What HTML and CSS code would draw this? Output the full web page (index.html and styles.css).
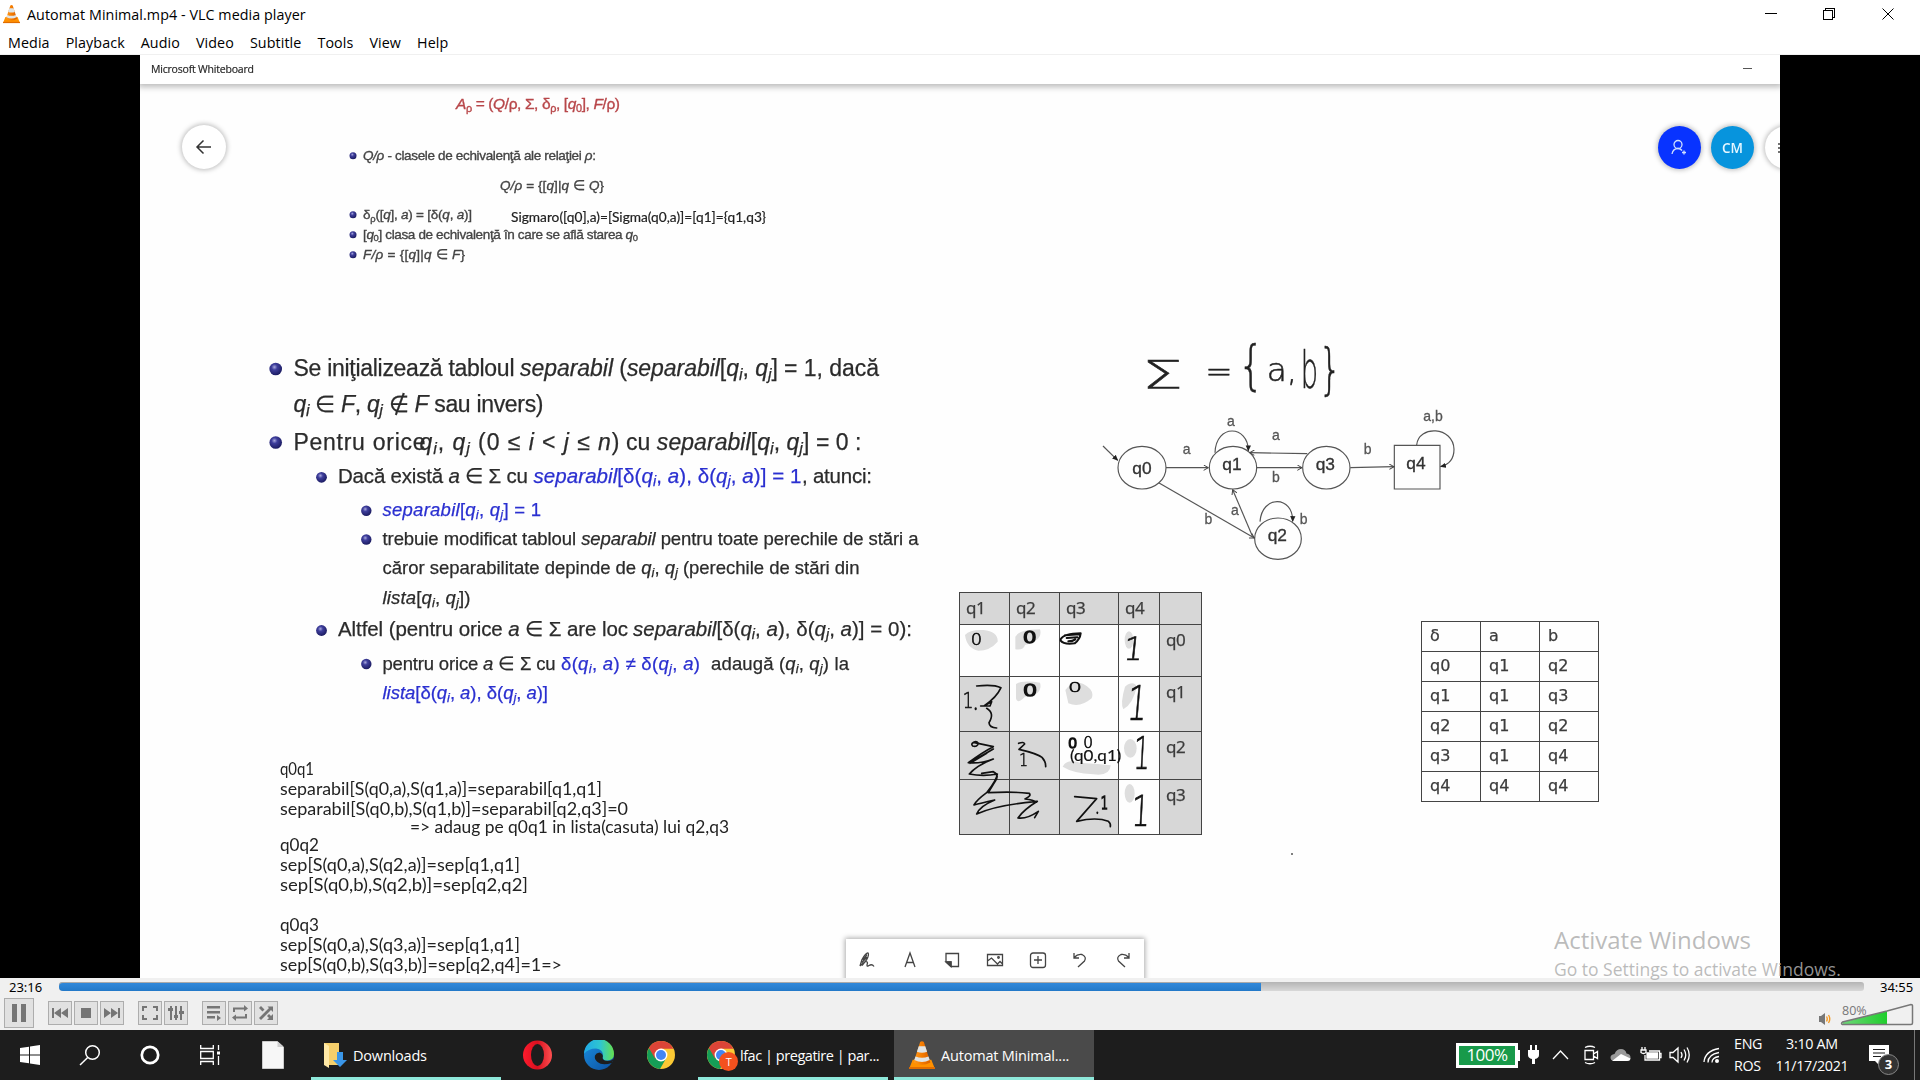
FILE: index.html
```html
<!DOCTYPE html>
<html lang="en">
<head>
<meta charset="utf-8">
<title>Automat Minimal.mp4 - VLC media player</title>
<link rel="stylesheet" href="styles.css">
</head>
<body>
<svg class="defs" width="0" height="0" aria-hidden="true">
  <defs>
    <radialGradient id="ball" cx=".4" cy=".35" r=".65"><stop offset="0" stop-color="#a9a9dd"/><stop offset=".35" stop-color="#3e3e9c"/><stop offset="1" stop-color="#1c1c62"/></radialGradient>
    <linearGradient id="coneFill"><stop offset="0" stop-color="#ff9a1e"/><stop offset=".5" stop-color="#f57c00"/><stop offset="1" stop-color="#d85f00"/></linearGradient>
    <linearGradient id="operaFill"><stop offset="0" stop-color="#ff1b2d"/><stop offset=".5" stop-color="#d8101f"/><stop offset="1" stop-color="#ff5050"/></linearGradient>
    <linearGradient id="edgeTop"><stop offset="0" stop-color="#1fa9e8"/><stop offset=".55" stop-color="#2fc6cf"/><stop offset="1" stop-color="#66e04c"/></linearGradient>
    <linearGradient id="edgeLow" x1="0" y1="0" x2="1" y2="1"><stop offset="0" stop-color="#1a8ee0"/><stop offset="1" stop-color="#0c4f9e"/></linearGradient>
    <linearGradient id="volFill"><stop offset="0" stop-color="#6fd67a"/><stop offset="1" stop-color="#1fce2c"/></linearGradient>
    <symbol id="cone" viewBox="0 0 28 30">
      <path d="M4 20h20l4 10H0z" fill="#ff9100"/><path d="M0 28h28v2H0z" fill="#e06c00"/>
      <path d="M12 1q2-1.500 4 0l7 22q-9 5-18 0z" fill="url(#coneFill)"/>
      <path d="M10.500 5.500h7l2 6q-5.500 2-11 0zM7 16.500q7 3 14 0l1.300 4q-8.300 4-16.600 0z" fill="#dfe4e6"/>
    </symbol>
    <symbol id="chrome" viewBox="0 0 28 28">
      <circle cx="14" cy="14" r="14" fill="#fbc934"/>
      <path d="M14 14L1.900 7A14 14 0 0 0 13 28l6-10.500z" fill="#159e57"/>
      <path d="M1.900 7A14 14 0 0 1 26.500 7.700H14L8 17.500z" fill="#db4437"/>
      <circle cx="14" cy="14" r="6.400" fill="#fff"/><circle cx="14" cy="14" r="5" fill="#4285f4"/>
    </symbol>
    <marker id="open" viewBox="0 0 18 18" refX="16" refY="9" markerWidth="18" markerHeight="18" markerUnits="userSpaceOnUse" orient="auto"><path d="M2 1L16 9L2 17" fill="none" stroke="#444" stroke-width="3"/></marker>
    <marker id="solid" viewBox="0 0 16 16" refX="14" refY="8" markerWidth="18" markerHeight="18" markerUnits="userSpaceOnUse" orient="auto"><path d="M0 1L16 8L0 15z" fill="#222"/></marker>
  </defs>
</svg>

<header class="titlebar">
  <svg class="app-icon" width="17" height="20"><use href="#cone"/></svg>
  <span class="app-title">Automat Minimal.mp4 - VLC media player</span>
  <svg class="win-controls" width="130" height="14" fill="none" stroke="#000" shape-rendering="crispEdges"><path d="M0 6.500h12M58.500 3.500h9v9h-9zM60.500 3v-1.500h9v9h-2"/><path d="M117.500 1.500l11 11M128.500 1.500l-11 11" shape-rendering="auto"/></svg>
</header>
<nav class="menubar">
  <span>Media</span><span>Playback</span><span>Audio</span><span>Video</span><span>Subtitle</span><span>Tools</span><span>View</span><span>Help</span>
</nav>

<main class="video">
  <section class="board">
    <div class="board-head"><span>Microsoft Whiteboard</span><i></i></div>

    <svg class="ink" viewBox="140 55 1640 923" width="1640" height="923">
      <g class="formula small">
        <text class="red" x="456" y="109" textLength="164"><tspan class="it">A</tspan><tspan class="sub" dy="3">ρ</tspan><tspan dy="-3"> = (</tspan><tspan class="it">Q</tspan>/ρ, Σ, δ<tspan class="sub" dy="3">ρ</tspan><tspan dy="-3">, [</tspan><tspan class="it">q</tspan><tspan class="sub" dy="3">0</tspan><tspan dy="-3">], </tspan><tspan class="it">F</tspan>/ρ)</text>
        <text x="363" y="159.500" textLength="233"><tspan class="it">Q/ρ</tspan> - clasele de echivalenţă ale relaţiei <tspan class="it">ρ</tspan>:</text>
        <text x="500" y="189.500" textLength="104"><tspan class="it">Q/ρ</tspan> = {[<tspan class="it">q</tspan>]|<tspan class="it">q</tspan> ∈ <tspan class="it">Q</tspan>}</text>
        <text x="363" y="219" textLength="109">δ<tspan class="sub" dy="3">ρ</tspan><tspan dy="-3">([</tspan><tspan class="it">q</tspan>], <tspan class="it">a</tspan>) = [δ(<tspan class="it">q</tspan>, <tspan class="it">a</tspan>)]</text>
        <text x="363" y="238.500" textLength="275">[<tspan class="it">q</tspan><tspan class="sub" dy="2">0</tspan><tspan dy="-2">] clasa de echivalenţă în care se află starea </tspan><tspan class="it">q</tspan><tspan class="sub" dy="2">0</tspan></text>
        <text x="363" y="259" textLength="102"><tspan class="it">F/ρ</tspan> = {[<tspan class="it">q</tspan>]|<tspan class="it">q</tspan> ∈ <tspan class="it">F</tspan>}</text>
      </g>
      <g fill="url(#ball)">
        <circle cx="353" cy="155.700" r="3.500"/><circle cx="353" cy="214.700" r="3.500"/><circle cx="353" cy="234.700" r="3.500"/><circle cx="353" cy="254.700" r="3.500"/>
        <circle cx="275.700" cy="369" r="6.300"/><circle cx="275.700" cy="442.500" r="6.300"/>
        <circle cx="321.500" cy="477.300" r="5.400"/><circle cx="321.500" cy="630.500" r="5.400"/>
        <circle cx="366.300" cy="510.700" r="5.200"/><circle cx="366.300" cy="539.500" r="5.200"/><circle cx="366.300" cy="664" r="5.200"/>
      </g>

      <g class="formula">
        <g class="l1">
          <text x="293.500" y="375.500" textLength="221">Se iniţializează tabloul</text>
          <text x="520" y="375.500" textLength="359"><tspan class="it">separabil</tspan> (<tspan class="it">separabil</tspan>[<tspan class="it">q</tspan><tspan class="sub it" dy="4">i</tspan><tspan dy="-4">, </tspan><tspan class="it">q</tspan><tspan class="sub it" dy="4">j</tspan><tspan dy="-4">] = 1, dacă</tspan></text>
          <text x="293.500" y="411.500" textLength="250"><tspan class="it">q</tspan><tspan class="sub it" dy="4">i</tspan><tspan dy="-4"> ∈ </tspan><tspan class="it">F</tspan>, <tspan class="it">q</tspan><tspan class="sub it" dy="4">j</tspan><tspan dy="-4"> ∉ </tspan><tspan class="it">F</tspan> sau invers)</text>
          <text x="293.500" y="449.500" textLength="132">Pentru orice </text>
          <text x="419.500" y="449.500" textLength="200"><tspan class="it">q</tspan><tspan class="sub it" dy="4">i</tspan><tspan dy="-4">, </tspan><tspan class="it">q</tspan><tspan class="sub it" dy="4">j</tspan><tspan dy="-4"> (0 ≤ </tspan><tspan class="it">i</tspan> &lt; <tspan class="it">j</tspan> ≤ <tspan class="it">n</tspan>)</text>
          <text x="626" y="449.500" textLength="235.500">cu <tspan class="it">separabil</tspan>[<tspan class="it">q</tspan><tspan class="sub it" dy="4">i</tspan><tspan dy="-4">, </tspan><tspan class="it">q</tspan><tspan class="sub it" dy="4">j</tspan><tspan dy="-4">] = 0 :</tspan></text>
        </g>
        <g class="l2">
          <text x="338" y="482.500" textLength="190">Dacă există <tspan class="it">a</tspan> ∈ Σ cu</text>
          <text class="blue" x="533.500" y="482.500" textLength="268"><tspan class="it">separabil</tspan>[δ(<tspan class="it">q</tspan><tspan class="sub it" dy="3">i</tspan><tspan dy="-3">, </tspan><tspan class="it">a</tspan>), δ(<tspan class="it">q</tspan><tspan class="sub it" dy="3">j</tspan><tspan dy="-3">, </tspan><tspan class="it">a</tspan>)] = 1</text>
          <text x="802" y="482.500" textLength="70">, atunci:</text>
          <text x="338" y="636" textLength="290">Altfel (pentru orice <tspan class="it">a</tspan> ∈ Σ are loc</text>
          <text x="633" y="636" textLength="279"><tspan class="it">separabil</tspan>[δ(<tspan class="it">q</tspan><tspan class="sub it" dy="3">i</tspan><tspan dy="-3">, </tspan><tspan class="it">a</tspan>), δ(<tspan class="it">q</tspan><tspan class="sub it" dy="3">j</tspan><tspan dy="-3">, </tspan><tspan class="it">a</tspan>)] = 0):</text>
        </g>
        <g class="l3">
          <text class="blue" x="382.500" y="516" textLength="158.500"><tspan class="it">separabil</tspan>[<tspan class="it">q</tspan><tspan class="sub it" dy="3">i</tspan><tspan dy="-3">, </tspan><tspan class="it">q</tspan><tspan class="sub it" dy="3">j</tspan><tspan dy="-3">] = 1</tspan></text>
          <text x="382.500" y="544.500" textLength="536">trebuie modificat tabloul <tspan class="it">separabil</tspan> pentru toate perechile de stări a</text>
          <text x="382.500" y="574" textLength="477">căror separabilitate depinde de <tspan class="it">q</tspan><tspan class="sub it" dy="3">i</tspan><tspan dy="-3">, </tspan><tspan class="it">q</tspan><tspan class="sub it" dy="3">j</tspan><tspan dy="-3"> (perechile de stări din</tspan></text>
          <text x="382.500" y="603.500" textLength="88"><tspan class="it">lista</tspan>[<tspan class="it">q</tspan><tspan class="sub it" dy="3">i</tspan><tspan dy="-3">, </tspan><tspan class="it">q</tspan><tspan class="sub it" dy="3">j</tspan><tspan dy="-3">])</tspan></text>
          <text x="382.500" y="670" textLength="173">pentru orice <tspan class="it">a</tspan> ∈ Σ cu</text>
          <text class="blue" x="561" y="670" textLength="139">δ(<tspan class="it">q</tspan><tspan class="sub it" dy="3">i</tspan><tspan dy="-3">, </tspan><tspan class="it">a</tspan>) ≠ δ(<tspan class="it">q</tspan><tspan class="sub it" dy="3">j</tspan><tspan dy="-3">, </tspan><tspan class="it">a</tspan>)</text>
          <text x="711" y="670" textLength="138">adaugă (<tspan class="it">q</tspan><tspan class="sub it" dy="3">i</tspan><tspan dy="-3">, </tspan><tspan class="it">q</tspan><tspan class="sub it" dy="3">j</tspan><tspan dy="-3">) la</tspan></text>
          <text class="blue" x="382.500" y="699" textLength="165.500"><tspan class="it">lista</tspan>[δ(<tspan class="it">q</tspan><tspan class="sub it" dy="3">i</tspan><tspan dy="-3">, </tspan><tspan class="it">a</tspan>), δ(<tspan class="it">q</tspan><tspan class="sub it" dy="3">j</tspan><tspan dy="-3">, </tspan><tspan class="it">a</tspan>)]</text>
        </g>
      </g>

      <g class="hand">
        <text class="hand-s" x="511" y="222" textLength="255" lengthAdjust="spacingAndGlyphs">Sigmaro([q0],a)=[Sigma(q0,a)]=[q1]={q1,q3}</text>
        <text x="280" y="775" textLength="34" lengthAdjust="spacingAndGlyphs">q0q1</text>
        <text x="280" y="794.500" textLength="322" lengthAdjust="spacingAndGlyphs">separabil[S(q0,a),S(q1,a)]=separabil[q1,q1]</text>
        <text x="280" y="814.500" textLength="348" lengthAdjust="spacingAndGlyphs">separabil[S(q0,b),S(q1,b)]=separabil[q2,q3]=0</text>
        <text x="410" y="832.500" textLength="319" lengthAdjust="spacingAndGlyphs">=&gt; adaug pe q0q1 in lista(casuta) lui q2,q3</text>
        <text x="280" y="851" textLength="39" lengthAdjust="spacingAndGlyphs">q0q2</text>
        <text x="280" y="870.500" textLength="240" lengthAdjust="spacingAndGlyphs">sep[S(q0,a),S(q2,a)]=sep[q1,q1]</text>
        <text x="280" y="890.500" textLength="248" lengthAdjust="spacingAndGlyphs">sep[S(q0,b),S(q2,b)]=sep[q2,q2]</text>
        <text x="280" y="931" textLength="39" lengthAdjust="spacingAndGlyphs">q0q3</text>
        <text x="280" y="950.500" textLength="240" lengthAdjust="spacingAndGlyphs">sep[S(q0,a),S(q3,a)]=sep[q1,q1]</text>
        <text x="280" y="971" textLength="282" lengthAdjust="spacingAndGlyphs">sep[S(q0,b),S(q3,b)]=sep[q2,q4]=1=&gt;</text>
      </g>

      <g class="automaton" transform="translate(1080 320) scale(.33333)">
        <g class="sigma">
          <text x="185" y="208" font-size="118" textLength="124" lengthAdjust="spacingAndGlyphs">Σ</text>
          <text x="376" y="186" font-size="88" textLength="82" lengthAdjust="spacingAndGlyphs">=</text>
          <text x="474" y="191" font-size="160" textLength="78" lengthAdjust="spacingAndGlyphs">{</text>
          <text x="560" y="182" font-size="96" textLength="92" lengthAdjust="spacingAndGlyphs">a,</text>
          <text x="662" y="203" font-size="154" textLength="52" lengthAdjust="spacingAndGlyphs">b</text>
          <text x="716" y="205" font-size="168" textLength="68" lengthAdjust="spacingAndGlyphs">}</text>
        </g>
        <g fill="none" stroke="#555" stroke-width="3.500">
          <ellipse cx="186" cy="443" rx="72" ry="64"/><ellipse cx="459" cy="443" rx="71" ry="64"/><ellipse cx="739" cy="443" rx="71" ry="64"/><ellipse cx="594" cy="656" rx="70" ry="62"/>
          <path d="M943 376h137v131H943z"/>
          <path d="M69 378L113 421" marker-end="url(#solid)"/><path d="M405 398C408 310 505 315 505 392" marker-end="url(#solid)"/><path d="M540 605C546 523 640 527 638 604" marker-end="url(#solid)"/><path d="M1010 375C1015 315 1120 318 1122 388Q1122 430 1082 440" marker-end="url(#solid)"/>
          <path d="M258 443H385" marker-end="url(#open)"/><path d="M530 443H666" marker-end="url(#open)"/><path d="M682 401L509 398" marker-end="url(#open)"/><path d="M811 443L942 440" marker-end="url(#open)"/><path d="M236 488L523 654" marker-end="url(#open)"/><path d="M518 650L458 509" marker-end="url(#open)"/>
        </g>
        <g class="state"><text x="186" y="461">q0</text><text x="456" y="451">q1</text><text x="736" y="451">q3</text><text x="1008" y="448">q4</text><text x="592" y="662">q2</text></g>
        <g class="edge"><text x="453" y="319">a</text><text x="320" y="402">a</text><text x="588" y="359">a</text><text x="588" y="487">b</text><text x="863" y="402">b</text><text x="1059" y="303">a,b</text><text x="465" y="586">a</text><text x="385" y="612">b</text><text x="671" y="612">b</text></g>
      </g>
      <circle cx="1292" cy="854" r="1" fill="#555"/>
    </svg>

    <table class="grid pairs">
      <colgroup><col class="w50"><col class="w50"><col class="w59"><col class="w41"><col class="w42"></colgroup>
      <tr class="r1"><td>q1</td><td>q2</td><td>q3</td><td>q4</td><td></td></tr>
      <tr class="r2"><td class="on"></td><td class="on"></td><td class="on"></td><td class="on"></td><td>q0</td></tr>
      <tr class="r3"><td></td><td class="on"></td><td class="on"></td><td class="on"></td><td>q1</td></tr>
      <tr class="r4"><td></td><td></td><td class="on"></td><td class="on"></td><td>q2</td></tr>
      <tr class="r5"><td></td><td></td><td></td><td class="on"></td><td>q3</td></tr>
    </table>

    <svg class="marks" viewBox="0 0 840 810" width="280" height="270">
      <g fill="#dedede">
        <path d="M75 165Q90 148 130 150Q175 155 173 185Q150 212 115 212Q80 205 75 165zM226 170Q240 148 300 148Q310 180 255 195Q250 212 226 208zM228 312Q250 300 300 308Q310 345 255 350Q230 375 228 355zM376 330Q400 300 430 312Q465 330 455 355Q420 385 385 370zM368 560Q380 535 420 548Q480 552 512 556Q510 590 460 583Q400 580 368 560z"/>
        <ellipse cx="567" cy="180" rx="13" ry="26"/><path d="M555 320Q580 300 590 320Q580 370 550 388Q540 370 555 320z"/><ellipse cx="571" cy="505" rx="19" ry="28"/><ellipse cx="569" cy="640" rx="15" ry="28"/>
      </g>
      <g class="scribble">
        <path d="M362 178Q372 160 422 160Q420 178 404 190Q370 194 362 182M380 174L412 172M385 184Q398 184 406 178M375 166L420 163" stroke-width="6"/>
        <path d="M110 318Q160 312 183 323Q170 352 133 377L155 365L150 378L122 378M140 385Q165 400 147 428Q148 443 170 444"/>
        <path d="M107 385v3" stroke-width="6"/>
        <path d="M97 490Q108 480 115 490Q112 502 98 498Q92 492 100 487L160 500Q130 515 85 548Q120 552 160 537Q110 556 88 582Q130 590 172 582Q170 600 140 638Q110 660 102 675Q120 670 164 660Q120 678 110 702Q170 675 292 664Q250 690 234 714Q260 718 295 694L284 713M94 545L160 507M140 520L90 550M125 580L160 575Q180 585 165 605L145 638Q220 634 268 640Q275 648 255 657Q280 660 290 666"/>
        <path d="M236 490Q252 484 254 492L237 508Q290 520 306 532Q318 545 317 560"/>
        <path d="M404 650L470 656Q440 690 410 724Q470 710 505 724Q513 730 511 740"/><path d="M472 697v3" stroke-width="5"/>
      </g>
      <g class="digits">
        <text x="92" y="194" font-size="50" textLength="34" lengthAdjust="spacingAndGlyphs">0</text><text x="248" y="188" font-size="46" class="heavy" textLength="42" lengthAdjust="spacingAndGlyphs">0</text><text x="248" y="347" font-size="50" class="heavy" textLength="44" lengthAdjust="spacingAndGlyphs">0</text><text x="384" y="337" font-size="42" textLength="42" lengthAdjust="spacingAndGlyphs">0</text>
        <text x="384" y="505" font-size="44" class="heavy">0</text><text x="430" y="503" font-size="46">0</text>
        <text transform="translate(548 241) skewX(-6)" font-size="96" textLength="58" lengthAdjust="spacingAndGlyphs">1</text>
        <text transform="translate(558 420) skewX(-5)" font-size="144" textLength="60" lengthAdjust="spacingAndGlyphs">1</text>
        <text transform="translate(578 567) skewX(-3)" font-size="136" textLength="50" lengthAdjust="spacingAndGlyphs">1</text>
        <text transform="translate(572 738) skewX(-3)" font-size="128" textLength="56" lengthAdjust="spacingAndGlyphs">1</text>
        <text x="68" y="384" font-size="64" textLength="32" lengthAdjust="spacingAndGlyphs">1</text><text x="238" y="558" font-size="54" textLength="26" lengthAdjust="spacingAndGlyphs">1</text><text x="482" y="688" font-size="54" textLength="22" lengthAdjust="spacingAndGlyphs" class="heavy">1</text>
        <text class="pair" x="390" y="543" font-size="43" textLength="154" lengthAdjust="spacingAndGlyphs">(q0,q1)</text>
      </g>
    </svg>

    <table class="grid delta">
      <tr><td>δ</td><td>a</td><td>b</td></tr>
      <tr><td>q0</td><td>q1</td><td>q2</td></tr>
      <tr><td>q1</td><td>q1</td><td>q3</td></tr>
      <tr><td>q2</td><td>q1</td><td>q2</td></tr>
      <tr><td>q3</td><td>q1</td><td>q4</td></tr>
      <tr><td>q4</td><td>q4</td><td>q4</td></tr>
    </table>

    <div class="round back"><svg width="18" height="18" fill="none" stroke="#333" stroke-width="1.500"><path d="M16 9H2M8.500 2.500L2 9l6.500 6.500"/></svg></div>
    <div class="people">
      <div class="round invite"><svg width="18" height="18" fill="none" stroke="#cfe0ff" stroke-width="1.300"><circle cx="8" cy="5.500" r="4"/><path d="M2 15Q3 9.500 8 9.500Q10.500 9.500 12 11.500M14 11.500v4M12 13.500h4"/></svg></div>
      <div class="round member">CM</div>
      <div class="round more"><svg width="16" height="12" stroke="#444" stroke-width="1.500"><path d="M0 2h16M0 6h16M0 10h16"/></svg></div>
    </div>
    <div class="tools">
      <svg viewBox="0 0 18 18"><path d="M2 15L4 8.500Q8 1.500 10 2q1.500 1.500-1.500 7L4 14.500M5 9L9 3.500M4 11.500L9 6M2 15Q9 8 9.500 12Q8 16.500 11 14.500t5 1"/></svg>
      <svg viewBox="0 0 18 18"><path d="M4 16L9 2l5 14M5.700 11.500h6.600"/></svg>
      <svg viewBox="0 0 18 18"><path d="M3 2.500h12.500v13H8L3 11zM3 11h5v4.500"/><path d="M3 11h5v4.500z" fill="#444"/></svg>
      <svg viewBox="0 0 18 18"><path d="M1.500 3.500h15v11h-15zM1.500 10l4-3 6 6 2.500-2.500 2.500 2.500"/><circle cx="12.500" cy="6.500" r=".8"/></svg>
      <svg viewBox="0 0 18 18"><rect x="1.500" y="2" width="15" height="14.500" rx="2.500"/><path d="M9 5v8M5 9h8"/></svg>
      <svg viewBox="0 0 18 18"><path d="M3 2v5h5M3 6.500Q7 2.500 11 3.500Q16 6 13.500 10L7 16"/></svg>
      <svg viewBox="0 0 18 18"><path d="M15 2v5h-5M15 6.500Q11 2.500 7 3.500Q2 6 4.500 10L11 16"/></svg>
    </div>
  </section>
</main>

<section class="player">
  <div class="seek"><time>23:16</time><div class="track"><div class="played"></div></div><time>34:55</time></div>
  <div class="controls">
    <button class="big"><svg width="18" height="20"><path d="M2 1h5v18H2zM11 1h5v18h-5z"/></svg></button>
    <div class="group">
      <button><svg width="16" height="16"><path d="M0 3h2v10H0zM2 8l7-5v10zM9 8l7-5v10z"/></svg></button>
      <button><svg width="16" height="16"><path d="M3 3h10v10H3z"/></svg></button>
      <button><svg width="16" height="16"><path d="M14 3h2v10h-2zM0 3l7 5-7 5zM7 3l7 5-7 5z"/></svg></button>
    </div>
    <div class="group">
      <button><svg width="16" height="16"><path d="M0 1h5v2H2v3H0zM11 1h5v5h-2V3h-3zM0 10h2v3h3v2H0zM14 10h2v5h-5v-2h3z"/></svg></button>
      <button><svg width="16" height="16"><path d="M2 1h2v14H2zM0 3h5v3H0zM7 1h2v14H7zM6 10h4v3H6zM12 1h2v14h-2zM11 6h5v3h-5z"/></svg></button>
    </div>
    <div class="group">
      <button><svg width="16" height="16"><path d="M1 1h13v2.500H1zM1 6h13v2.500H1zM1 11h8v2.500H1zM11 10l4 3-4 3z"/></svg></button>
      <button><svg width="16" height="16"><path d="M1 7V2.500h11V0l4 3.500-4 3V4.500H3V7zM15 9v4.500H4V16l-4-3.500 4-3v2h9V9z"/></svg></button>
      <button><svg width="16" height="16"><path d="M1 13L11 3 9.500 1.500H15V7l-2-2L3 15zM1 3l2-2 3.500 3.500-2 2zM9 11l2-2 2 2 2-2v6H9l2-2z"/></svg></button>
    </div>
    <div class="volume">
      <svg width="12" height="12"><path d="M0 3h2l4-3v12L2 9H0z" fill="#777"/><path d="M7.500 3.500q1.500 2.500 0 5M9.500 2q2.500 4 0 8" fill="none" stroke="#f59a23" stroke-width="1.400"/></svg>
      <div class="slider"><svg width="74" height="23"><path d="M1.500 19.500L47 8V21H3z" fill="url(#volFill)"/><path d="M47 8L71 1.500q1.500 0 1.500 1V20q0 1.500-1.500 1.500H2.500q-2-1 0-2.500z" fill="none" stroke="#777" stroke-width="1.500"/></svg><span>80%</span></div>
    </div>
  </div>
</section>

<aside class="watermark"><p>Activate Windows</p><p>Go to Settings to activate Windows.</p></aside>

<footer class="taskbar">
  <div class="slot w60"><svg width="20" height="20" fill="#fff"><path d="M0 3l9-1.300V9.500H0zM10 1.500L20 0v9.500H10zM0 10.500h9v7.800L0 17zM10 10.500h10V20l-10-1.500z"/></svg></div>
  <div class="slot w60"><svg width="22" height="22" fill="none" stroke="#fff" stroke-width="1.500"><circle cx="13.500" cy="8.500" r="6.800"/><path d="M8.700 13.500L1 21"/></svg></div>
  <div class="slot w60"><svg width="20" height="20"><circle cx="10" cy="10" r="8.200" fill="none" stroke="#fff" stroke-width="2.700"/></svg></div>
  <div class="slot w60"><svg width="20" height="20" fill="none" stroke="#fff" stroke-width="1.300"><path d="M.7 0v3.500h12.600V0M.7 20v-3.500h12.600V20M.7 6.500h12.600v7H.7zM18.500 0v5M18.500 11v9"/><path d="M17 6.500h3v3h-3z" fill="#fff" stroke="none"/></svg></div>
  <div class="slot w66"><svg width="22" height="28"><path d="M.5.500h15L21.500 6v21.500H.5z" fill="#f7f7f7" stroke="#ccc"/><path d="M15.500.500V6h6z" fill="#cfcfcf"/></svg></div>
  <div class="task downloads"><svg width="23" height="28"><path d="M0 2h15v22H0z" fill="#f5cf6b"/><path d="M0 2l5 3v22l-5-3z" fill="#ffe9a6"/><path d="M13 11h6v8h4l-7 7-7-7h4z" fill="#3a96e8"/></svg><span>Downloads</span></div>
  <div class="slot opera"><svg width="29" height="30"><ellipse cx="14.500" cy="15" rx="14.500" ry="14.500" fill="url(#operaFill)"/><ellipse cx="14.500" cy="15" rx="6.500" ry="11" fill="#1d1d1d"/></svg></div>
  <div class="slot edge-app"><svg width="30" height="30"><circle cx="15" cy="15" r="15" fill="url(#edgeLow)"/><path d="M0 14A15 15 0 0 1 30 14Q30 20 23 20.500Q18 20.500 19 16Q19 9 12 8.500Q4 8.500 0 14z" fill="url(#edgeTop)"/><path d="M11 15.500Q12 13 15.500 12.500Q20 14 18.500 18Q19 21 24 21Q28 21 30 18L28 23Q18 26 13.500 22Q10 19 11 15.500z" fill="#1d1d1d"/></svg></div>
  <div class="slot chrome-app"><svg width="28" height="28"><use href="#chrome"/></svg></div>
  <div class="task browser"><div class="badged"><svg width="28" height="28"><use href="#chrome"/></svg><b>T</b></div><span>lfac | pregatire | par...</span></div>
  <div class="task active"><svg width="26" height="30"><use href="#cone"/></svg><span>Automat Minimal....</span></div>

  <div class="tray">
    <div class="charge">100%</div>
    <svg class="plug" width="11" height="20" fill="#fff"><path d="M2 0h2v5h3V0h2v5h2v5q0 3-4 4v5H4v-5q-4-1-4-4V5h2z"/></svg>
    <svg class="icons" width="170" height="20" fill="none" stroke="#fff" stroke-width="1.300">
      <path d="M1 14l7.500-8 7.500 8"/>
      <path d="M33 5.500h8.500v9H33zM41.500 9l4-2.500v7l-4-2.500M33 2.500q5-2.500 10 0M33 17.500q5 2.500 10 0"/>
      <path d="M62 16q-3.500-.5-3.500-3.500t4-3.500q2-5 6.500-5t5.500 4.500q4 .5 4 4T75 16z" fill="#9a9a9a" stroke="none"/><path d="M60 16l9-7 9.500 4.500Q78 16 75 16z" fill="#fff" stroke="none"/>
      <path d="M97 6h10.500v9H93v-5M107.500 8.500h1.500v4h-1.500M90 2v3M93 2v3M89 5h5v2.500q-2.500 2-5 0z"/><path d="M95 8h10.500v5H95z" fill="#fff"/>
      <path d="M118 7.500h3l5-4.500v14l-5-4.500h-3zM129 7q2 3 0 6M132 4.500q3.500 5.500 0 11M135 2.500q4.500 7.500 0 15"/>
      <path d="M152 17Q153 6 167 3.500M156 17.500Q156 9.500 167 7.500M160 17.500Q160 12.500 167 11.500" /><circle cx="165" cy="16" r="2" fill="#fff" stroke="none"/>
    </svg>
    <div class="lang"><span>ENG</span><span>ROS</span></div>
    <div class="clock"><span>3:10 AM</span><span>11/17/2021</span></div>
    <div class="notify"><svg width="20" height="20"><path d="M0 0h20v16H10v4l-4-4H0z" fill="#fff"/><path d="M4 4.500h12M4 8h12M4 11.500h8" stroke="#1d1d1d" stroke-width="1.200"/></svg><b>3</b></div>
    <i class="peek"></i>
  </div>
</footer>
</body>
</html>
```
FILE: styles.css
```css
* { box-sizing: border-box; }
body {
  margin: 0;
  width: 1920px;
  height: 1080px;
  overflow: hidden;
  display: flex;
  flex-direction: column;
  background: #fff;
  color: #000;
  font-family: "Open Sans", "Noto Sans", sans-serif;
  font-size: 14px;
}
svg { display: block; flex: none; }
.defs { position: absolute; }

/* window chrome */
.titlebar { height: 30px; display: flex; align-items: center; padding: 0 25px 2px 3px; }
.app-icon { margin-right: 7px; }
.app-title { font-size: 14.3px; letter-spacing: .06px; }
.win-controls { margin-left: auto; }
.menubar { height: 25px; display: flex; align-items: center; gap: 16px; padding: 0 8px; font-size: 14.3px; letter-spacing: .09px; border-bottom: 1px solid #f0f0f0; }

/* video area */
.video { height: 923px; background: #000; display: flex; justify-content: center; }
.board { position: relative; width: 1640px; height: 923px; background: #fefefe; overflow: hidden; }
.board-head {
  height: 29px; display: flex; align-items: center; justify-content: space-between;
  padding: 0 28px 2px 11px; font-size: 10.500px; letter-spacing: -.2px; color: #222; background: #fff;
  -webkit-text-stroke: .2px #333; box-shadow: 0 1px 6px 2px #bbb; filter: blur(.3px);
}
.board-head i { width: 9px; height: 1.500px; background: #555; }
.ink, .marks { position: absolute; filter: blur(.4px); }
.ink { left: 0; top: 0; }
.marks { left: 800px; top: 525px; }

.formula { font-family: "Liberation Sans", sans-serif; fill: #2b2b2b; stroke: #2b2b2b; stroke-width: .25px; }
.it { font-style: italic; }
.sub { font-size: 70%; }
.blue { fill: #2a2fd0; stroke: #2a2fd0; }
.small { font-size: 13.500px; fill: #444; stroke: #444; stroke-width: .35px; }
.small .red { font-size: 15.500px; fill: #b8474a; stroke: #b8474a; }
.l1 { font-size: 23px; }
.l2 { font-size: 20.500px; }
.l3 { font-size: 18.500px; }
.hand { font-family: Lato, sans-serif; font-size: 17.500px; fill: #222; }
.hand-s { font-size: 13.500px; stroke: #222; stroke-width: .2px; }
.sigma { font-family: "DejaVu Sans Light", "DejaVu Sans", sans-serif; font-weight: 200; fill: #222; stroke: #222; stroke-width: 1.500px; }
.state { font: 52px "Liberation Sans", sans-serif; fill: #333; text-anchor: middle; stroke: #333; stroke-width: 1px; }
.edge { font: 42px "Liberation Sans", sans-serif; fill: #555; text-anchor: middle; stroke: #555; stroke-width: .8px; }
.scribble { fill: none; stroke: #111; stroke-width: 5px; stroke-linecap: round; stroke-linejoin: round; }
.digits { font-family: "DejaVu Sans Light", "DejaVu Sans", sans-serif; font-weight: 200; fill: #111; stroke: #111; stroke-width: 2px; }
.digits .heavy { stroke-width: 5px; }
.digits .pair { font-family: Lato, sans-serif; font-weight: 400; stroke-width: .5px; }

/* tables on the canvas */
.grid { position: absolute; border-collapse: collapse; table-layout: fixed; filter: blur(.4px); color: #3c3c3c; -webkit-text-stroke: .25px #3c3c3c; }
.grid td { border: 1.500px solid #444; padding: 0; vertical-align: top; }
.pairs { left: 819px; top: 537px; width: 242px; font: 17px/20px "Noto Sans", sans-serif; letter-spacing: -.5px; background: #d7d7d7; }
.pairs td { padding: 5px 0 0 6px; }
.pairs .on { background: #fefefe; }
.w50 { width: 50px; } .w59 { width: 59px; } .w41 { width: 41px; } .w42 { width: 42px; }
.r1 { height: 32px; } .r2 { height: 52px; } .r3 { height: 55px; } .r4 { height: 48px; } .r5 { height: 55px; }
.delta { left: 1281px; top: 566px; width: 178px; font: 16px/19px "DejaVu Sans", sans-serif; }
.delta tr { height: 30px; }
.delta td { padding: 4px 0 0 8px; }

/* floating whiteboard controls */
.round { width: 43px; height: 43px; border-radius: 50%; display: flex; align-items: center; justify-content: center; background: #fff; box-shadow: 0 0 5px 1px #bbb; filter: blur(.3px); }
.back { position: absolute; left: 42px; top: 70px; width: 44px; height: 44px; }
.people { position: absolute; left: 1517.500px; top: 71px; display: flex; gap: 10.500px; }
.people .round { flex: none; }
.people .invite { background: #0833ff; }
.people .member { background: #0794dd; color: #e6f7ff; font-size: 13.500px; font-weight: 600; }
.tools { position: absolute; left: 706px; top: 884px; width: 298px; height: 50px; padding-top: 12px; background: #fff; box-shadow: 0 0 5px 1px #aaa; display: flex; justify-content: space-around; filter: blur(.3px); }
.tools svg { width: 18px; height: 18px; fill: none; stroke: #444; stroke-width: 1.300px; }

/* player */
.player { height: 52px; background: #f0f0f0; }
.seek { height: 20px; display: flex; align-items: flex-start; padding: 0 7px 0 9px; font: 13px/18px "Noto Sans", sans-serif; }
.seek time { width: 33px; white-space: nowrap; }
.track { flex: 1; height: 9px; margin: 4px 16px 0 17px; border-radius: 3px; background: linear-gradient(#b4b4b4, #d8d8d8); }
.played { width: 1202px; height: 9px; border-top: 1px solid #a9a9a9; border-radius: 4px 0 0 4px; background: linear-gradient(#3088da, #2379c8); }
.controls { height: 32px; display: flex; align-items: center; gap: 14px; padding: 0 6px 2px 4px; }
.group { display: flex; gap: 2px; }
button { width: 24px; height: 24px; padding: 0; display: flex; align-items: center; justify-content: center; background: #e1e1e1; border: 1px solid #adadad; }
button svg { fill: #757575; }
button.big { width: 30px; height: 30px; }
.volume { margin-left: auto; display: flex; align-items: flex-end; gap: 9px; }
.volume > svg { margin-bottom: 0; }
.slider { position: relative; top: 1px; }
.slider span { position: absolute; left: 2px; top: -1px; font-size: 12.500px; color: #777; }

.watermark { position: absolute; left: 1554px; top: 923px; color: rgba(175,175,175,.85); white-space: nowrap; }
.watermark p { margin: 0; font-size: 24px; line-height: 34px; letter-spacing: 0; }
.watermark p + p { font-size: 17.500px; line-height: 24px; }

/* taskbar */
.taskbar { height: 50px; background: #1d1d1d; color: #fff; display: flex; align-items: stretch; }
.slot { display: flex; align-items: center; justify-content: center; flex: none; }
.w60 { width: 60px; }
.w66 { width: 66px; margin-right: 5px; }
.task { display: flex; align-items: center; border-bottom: 3px solid #8ee8da; padding-top: 3px; font-size: 14.500px; letter-spacing: -.2px; white-space: nowrap; flex: none; }
.task span { margin-left: 6px; }
.downloads { width: 190px; padding-left: 13px; }
.opera { width: 72px; }
.edge-app { width: 52px; }
.chrome-app { width: 72px; }
.browser { width: 190px; margin-left: 1px; padding-left: 9px; letter-spacing: -.46px; }
.browser span { margin-left: 5px; }
.badged { position: relative; }
.badged b { position: absolute; left: 12px; top: 11px; width: 19px; height: 19px; border-radius: 50%; background: #f4511e; font-size: 11px; font-weight: 400; line-height: 19px; text-align: center; }
.active { width: 200px; margin-left: 6px; padding-left: 15px; background: #4a4a4a; }

.tray { margin-left: auto; display: flex; align-items: center; }
.charge { position: relative; width: 62px; height: 25px; border: 3px solid #fff; background: #189a4a; font-size: 17px; line-height: 18px; text-align: center; margin-right: 10px; letter-spacing: -.5px; }
.charge::after { content: ""; position: absolute; left: 58px; top: 4px; width: 3px; height: 11px; background: #fff; }
.plug { margin-right: 13px; }
.icons { margin-right: 12px; }
.lang, .clock { display: flex; flex-direction: column; font-size: 14.300px; line-height: 22px; letter-spacing: -.3px; }
.lang { width: 28px; }
.clock { width: 76px; margin-left: 12px; align-items: center; }
.notify { position: relative; width: 64px; padding-left: 19px; }
.notify b { position: absolute; left: 28px; top: 9px; width: 21px; height: 21px; border: 1px solid #888; border-radius: 50%; background: #333; font-size: 13px; line-height: 19px; text-align: center; }
.peek { width: 1px; height: 50px; background: #777; margin-right: 5px; }
```
